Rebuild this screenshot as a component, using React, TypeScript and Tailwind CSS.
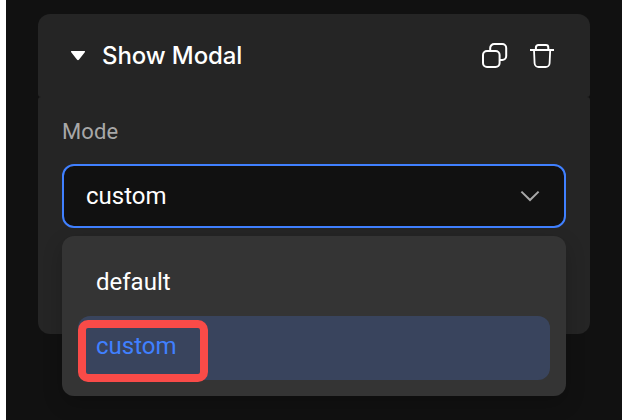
function CopyIcon() {
  return (
    <svg width="26" height="26" viewBox="0 0 26 26" fill="none" stroke="#fff" strokeWidth="2">
      <rect x="1" y="9" width="16.6" height="16" rx="4" />
      <path d="M8.2 9V6a4 4 0 0 1 4-4h8a4 4 0 0 1 4 4v8a4 4 0 0 1-4 4h-2.6" />
    </svg>
  );
}

function TrashIcon() {
  return (
    <svg width="24" height="26" viewBox="0 0 24 26" fill="none" stroke="#fff" strokeWidth="2">
      <path d="M0 8h24M5.9 8V5.4A2.4 2.4 0 0 1 8.3 3h7.6a2.4 2.4 0 0 1 2.4 2.4V8" />
      <path strokeWidth="1.8" d="m4 8 .6 13.2A4 4 0 0 0 8.6 25h7a4 4 0 0 0 4-3.8L20.2 8" />
    </svg>
  );
}

export default function App() {
  return (
    <div className="h-[420px] w-[640px] overflow-hidden bg-white pl-1.5 font-['Roboto',sans-serif] text-2xl text-white">
      <main className="h-full w-[616px] bg-[#111111] px-8 pt-3.5">
        <section className="h-80 w-[552px]">
          <header className="flex h-[83px] items-center rounded-t-xl rounded-b-[3px] bg-[#252525] pr-9 pl-8">
            <svg className="mr-4" width="16" height="12" viewBox="0 0 16 12" fill="#fff">
              <path d="M1.8 1h12.4c.8 0 1.1.7.6 1.3L8.9 9.8c-.5.6-1.3.6-1.8 0L1.2 2.3C.7 1.7 1 1 1.8 1Z" />
            </svg>
            <h2 className="font-['Inter',sans-serif] text-2xl leading-8 font-medium tracking-[-0.1px]">Show Modal</h2>
            <div className="mb-px ml-auto flex gap-[22px]">
              <CopyIcon />
              <TrashIcon />
            </div>
          </header>
          <div className="h-[237px] rounded-t-[3px] rounded-b-xl bg-[#252525] px-6 pt-[19px]">
            <div className="h-12 text-[22px] leading-8 tracking-[0.1px] text-[#a8a8a8]">Mode</div>
            <div className="relative">
              <div className="flex h-16 items-center justify-between rounded-xl border-2 border-[#4080ff] bg-[#111111] px-[22px]">
                <span>custom</span>
                <svg width="24" height="24" viewBox="0 0 24 24" fill="none" stroke="#a8a8a8" strokeWidth="2">
                  <path d="m3.4 7.6 8.6 8.4 8.6-8.4" />
                </svg>
              </div>
              <ul className="absolute top-[72px] left-0 h-40 w-[504px] rounded-xl bg-[#343434] p-4 shadow-[0_8px_20px_rgba(0,0,0,0.2)]">
                <li className="flex h-16 items-center px-[18px] pb-1">default</li>
                <li className="relative flex h-16 items-center rounded-xl bg-[#39445d] px-[18px] pb-1 text-[#4080ff]">
                  custom
                  <div className="absolute top-1 left-0 h-[62px] w-[130px] rounded-[10px] border-8 border-[#f94b48]" />
                </li>
              </ul>
            </div>
          </div>
        </section>
      </main>
    </div>
  );
}
